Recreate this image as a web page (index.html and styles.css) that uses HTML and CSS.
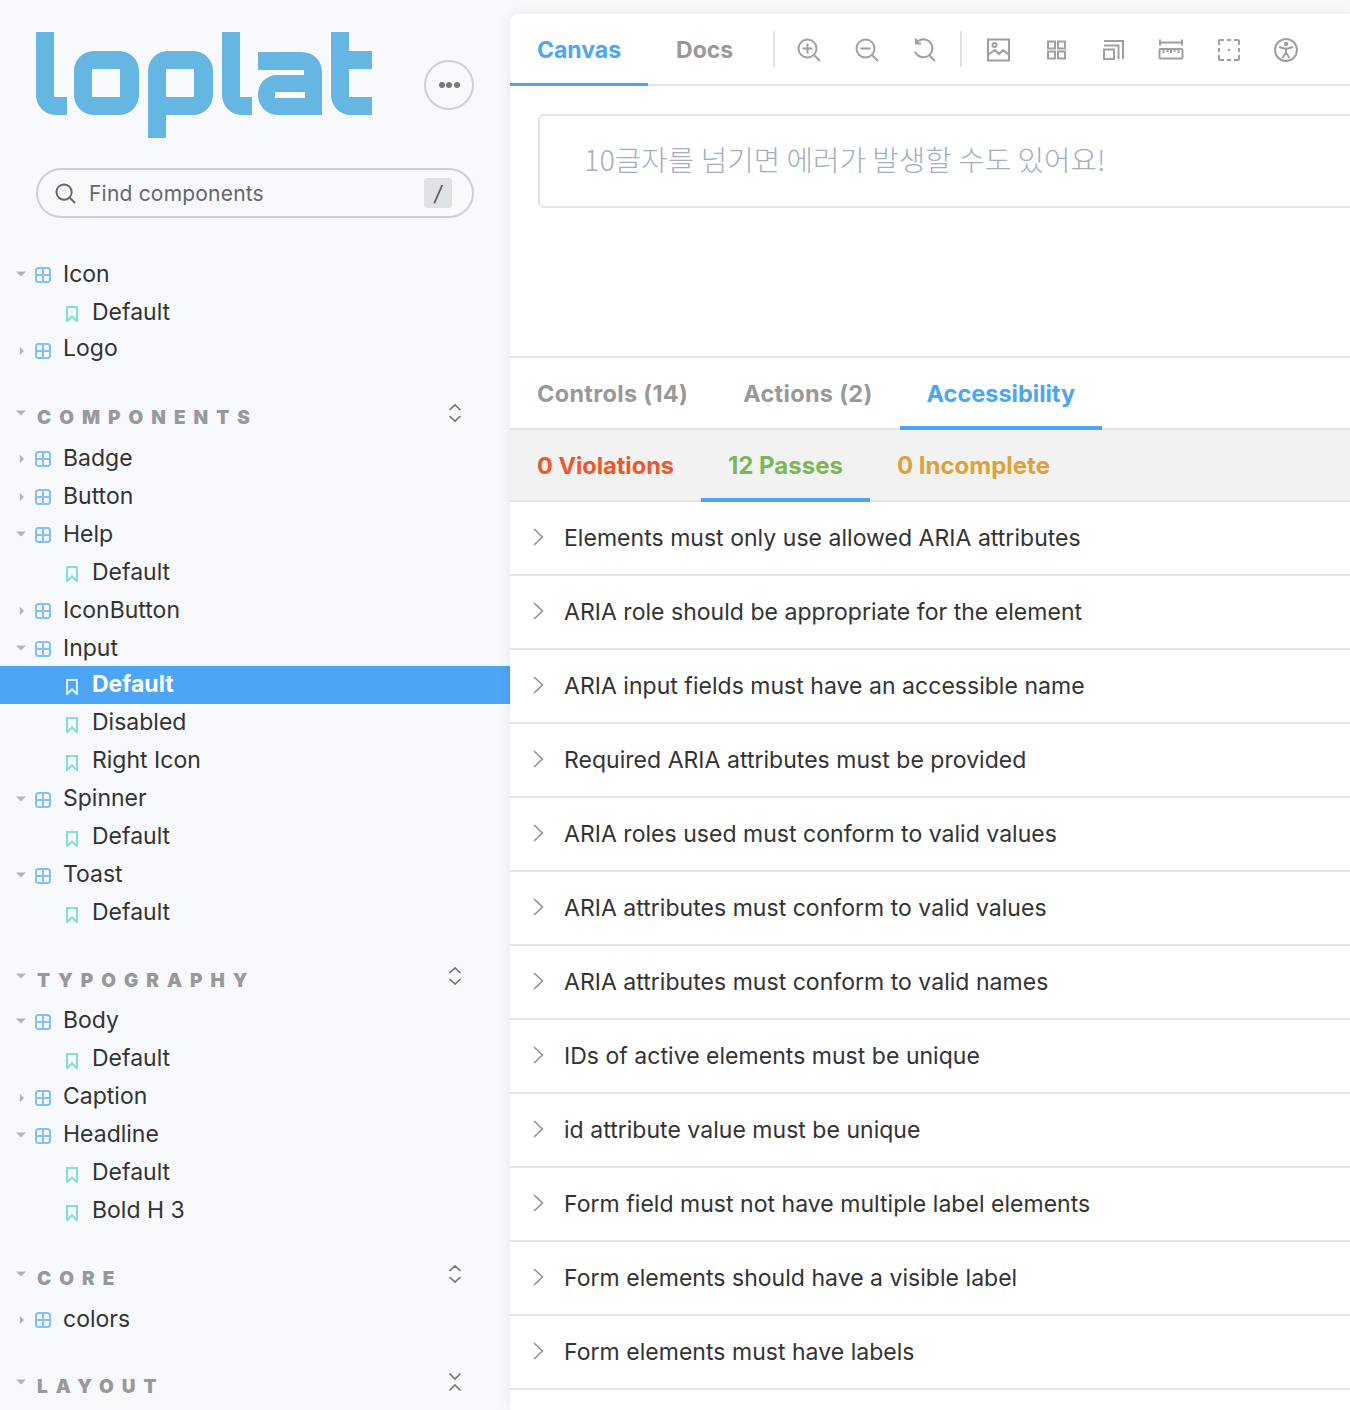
FILE: index.html
```html
<!DOCTYPE html>
<html lang="en">
<head>
<meta charset="utf-8">
<title>loplat</title>
<link rel="stylesheet" href="styles.css">
</head>
<body>
<svg class="defs" aria-hidden="true">
  <symbol id="box" viewBox="0 0 16 16"><rect x="1" y="1" width="14" height="14" rx="2.500" fill="none" stroke="currentColor" stroke-width="2"/><path d="M8 1v14M1 8h14" stroke="currentColor" stroke-width="2"/></symbol>
  <symbol id="mark" viewBox="0 0 12 16"><path d="M1 1h10v14L6 10.500 1 15z" fill="none" stroke="currentColor" stroke-width="2.200"/></symbol>
  <symbol id="right" viewBox="0 0 6 10"><path d="M1 0l5 5-5 5z" fill="currentColor"/></symbol>
  <symbol id="down" viewBox="0 0 10 6"><path d="M0 0.500h10L5 5.500z" fill="currentColor"/></symbol>
  <symbol id="updown" viewBox="0 0 14 20"><path d="M1.500 7L7 1.800 12.500 7M1.500 13L7 18.200 12.500 13" fill="none" stroke="currentColor" stroke-width="1.700"/></symbol>
  <symbol id="collapse" viewBox="0 0 14 20"><path d="M1.500 1.500L7 7 12.500 1.500M1.500 18.500L7 13 12.500 18.500" fill="none" stroke="currentColor" stroke-width="1.700"/></symbol>
  <symbol id="chev" viewBox="0 0 11 18"><path d="M1 1l8.500 8L1 17" fill="none" stroke="currentColor" stroke-width="1.500"/></symbol>
</svg>

<aside class="sidebar">
  <header class="brand">
    <svg class="logo" viewBox="0 0 337 106" role="img" aria-label="loplat">
      <path d="M0 0h18v65h13v18H20A20 20 0 0 1 0 63z"/>
      <path fill-rule="evenodd" d="M58 19h25a20 20 0 0 1 20 20v24a20 20 0 0 1-20 20H58a20 20 0 0 1-20-20V39a20 20 0 0 1 20-20zM56 37v28h28V37z"/>
      <path fill-rule="evenodd" d="M132 19h25a20 20 0 0 1 20 20v24a20 20 0 0 1-20 20h-27v23h-18V39a20 20 0 0 1 20-20zM130 37v28h28V37z"/>
      <path d="M186 0h18v65h12v18h-10a20 20 0 0 1-20-20z"/>
      <path fill-rule="evenodd" d="M222 20h44a20 20 0 0 1 20 20v43h-44a20 20 0 0 1-20-20v-1a19 19 0 0 1 19-19h27v-5h-46zM239 60v6h30v-6z"/>
      <path d="M295 0h18v19h23v18h-23v28h23v18h-21a20 20 0 0 1-20-20z"/>
    </svg>
    <button class="more" type="button" aria-label="More"><span></span><span></span><span></span></button>
  </header>
  <div class="search">
    <svg class="search-icon" viewBox="0 0 22 22"><circle cx="9.500" cy="9.500" r="8" fill="none" stroke="currentColor" stroke-width="2"/><path d="M15.500 15.500L21 21" stroke="currentColor" stroke-width="2"/></svg>
    <span class="search-text">Find components</span>
    <kbd class="key">/</kbd>
  </div>

  <nav class="tree first">
    <div class="row"><svg class="tw down"><use href="#down"/></svg><svg class="bx"><use href="#box"/></svg><span>Icon</span></div>
    <div class="row leaf"><svg class="bm"><use href="#mark"/></svg><span>Default</span></div>
    <div class="row raised"><svg class="tw"><use href="#right"/></svg><svg class="bx"><use href="#box"/></svg><span>Logo</span></div>
  </nav>

  <section>
    <h2 class="head"><svg class="tw down"><use href="#down"/></svg><span>COMPONENTS</span><svg class="ud"><use href="#updown"/></svg></h2>
    <div class="row"><svg class="tw"><use href="#right"/></svg><svg class="bx"><use href="#box"/></svg><span>Badge</span></div>
    <div class="row"><svg class="tw"><use href="#right"/></svg><svg class="bx"><use href="#box"/></svg><span>Button</span></div>
    <div class="row"><svg class="tw down"><use href="#down"/></svg><svg class="bx"><use href="#box"/></svg><span>Help</span></div>
    <div class="row leaf"><svg class="bm"><use href="#mark"/></svg><span>Default</span></div>
    <div class="row"><svg class="tw"><use href="#right"/></svg><svg class="bx"><use href="#box"/></svg><span>IconButton</span></div>
    <div class="row"><svg class="tw down"><use href="#down"/></svg><svg class="bx"><use href="#box"/></svg><span>Input</span></div>
    <div class="row leaf selected"><svg class="bm"><use href="#mark"/></svg><span>Default</span></div>
    <div class="row leaf"><svg class="bm"><use href="#mark"/></svg><span>Disabled</span></div>
    <div class="row leaf"><svg class="bm"><use href="#mark"/></svg><span>Right Icon</span></div>
    <div class="row"><svg class="tw down"><use href="#down"/></svg><svg class="bx"><use href="#box"/></svg><span>Spinner</span></div>
    <div class="row leaf"><svg class="bm"><use href="#mark"/></svg><span>Default</span></div>
    <div class="row"><svg class="tw down"><use href="#down"/></svg><svg class="bx"><use href="#box"/></svg><span>Toast</span></div>
    <div class="row leaf"><svg class="bm"><use href="#mark"/></svg><span>Default</span></div>
  </section>

  <section class="late">
    <h2 class="head"><svg class="tw down"><use href="#down"/></svg><span>TYPOGRAPHY</span><svg class="ud"><use href="#updown"/></svg></h2>
    <div class="row"><svg class="tw down"><use href="#down"/></svg><svg class="bx"><use href="#box"/></svg><span>Body</span></div>
    <div class="row leaf"><svg class="bm"><use href="#mark"/></svg><span>Default</span></div>
    <div class="row"><svg class="tw"><use href="#right"/></svg><svg class="bx"><use href="#box"/></svg><span>Caption</span></div>
    <div class="row"><svg class="tw down"><use href="#down"/></svg><svg class="bx"><use href="#box"/></svg><span>Headline</span></div>
    <div class="row leaf"><svg class="bm"><use href="#mark"/></svg><span>Default</span></div>
    <div class="row leaf"><svg class="bm"><use href="#mark"/></svg><span>Bold H 3</span></div>
  </section>

  <section>
    <h2 class="head"><svg class="tw down"><use href="#down"/></svg><span>CORE</span><svg class="ud"><use href="#updown"/></svg></h2>
    <div class="row"><svg class="tw"><use href="#right"/></svg><svg class="bx"><use href="#box"/></svg><span>colors</span></div>
  </section>

  <section>
    <h2 class="head"><svg class="tw down"><use href="#down"/></svg><span>LAYOUT</span><svg class="ud"><use href="#collapse"/></svg></h2>
  </section>
</aside>

<main class="panel">
  <div class="toolbar">
    <a class="tab active">Canvas</a>
    <a class="tab">Docs</a>
    <i class="sep sep-a"></i>
    <svg class="tool t1" viewBox="0 0 24 24"><circle cx="10.500" cy="10.500" r="9"/><path d="M17 17l6 6M10.500 5.500v10M5.500 10.500h10"/></svg>
    <svg class="tool t2" viewBox="0 0 24 24"><circle cx="10.500" cy="10.500" r="9"/><path d="M17 17l6 6M5.500 10.500h10"/></svg>
    <svg class="tool t3" viewBox="0 0 24 24"><path d="M4.500 4.500A9 9 0 1 1 3 13.500M4 0.500v5h5"/><path d="M18 18l5 5"/></svg>
    <i class="sep sep-b"></i>
    <svg class="tool t4" viewBox="0 0 24 24"><rect x="2" y="1.500" width="21" height="21"/><circle cx="8.500" cy="7" r="2"/><path d="M2 17l7-5 4 4 4-4 6 5"/></svg>
    <svg class="tool t5" viewBox="0 0 24 24"><rect x="4" y="3.500" width="7" height="7"/><rect x="14" y="3.500" width="7" height="7"/><rect x="4" y="13.500" width="7" height="7"/><rect x="14" y="13.500" width="7" height="7"/></svg>
    <svg class="tool t6" viewBox="0 0 24 24"><path d="M3 3h19v18M3 7.500h14.500V21"/><rect x="3" y="11.500" width="10" height="9.500"/></svg>
    <svg class="tool t7" viewBox="0 0 26 24"><path d="M2 1.500v6M24 1.500v6M2 4.500h22"/><rect x="1.500" y="11" width="23" height="9.500" rx="1"/><path d="M5.500 11v4M9.500 11v3M13 11v4M16.500 11v3M20.500 11v4"/></svg>
    <svg class="tool t8" viewBox="0 0 24 24"><path d="M2 7V3a1 1 0 0 1 1-1h4M10 2h4M17 2h4a1 1 0 0 1 1 1v4M22 10v4M22 17v4a1 1 0 0 1-1 1h-4M14 22h-4M7 22H3a1 1 0 0 1-1-1v-4M2 14v-4"/><circle class="solid" cx="12" cy="12" r="1.300"/></svg>
    <svg class="tool t9" viewBox="0 0 24 24"><circle cx="12" cy="12" r="11"/><circle class="solid" cx="12" cy="6" r="2.200"/><path d="M5 9l5 1.500h4L19 9M12 10.500v4M8.500 20l3.500-5.500 3.500 5.500"/></svg>
  </div>

  <div class="stage">
    <input class="field" type="text" placeholder="10글자를 넘기면 에러가 발생할 수도 있어요!" aria-label="Input">
  </div>

  <div class="addon-tabs">
    <a class="tab">Controls (14)</a>
    <a class="tab">Actions (2)</a>
    <a class="tab active">Accessibility</a>
  </div>

  <div class="a11y-tabs">
    <a class="a11y red">0 Violations</a>
    <a class="a11y green active">12 Passes</a>
    <a class="a11y amber">0 Incomplete</a>
  </div>

  <ul class="rules">
    <li><svg class="rule-chev"><use href="#chev"/></svg>Elements must only use allowed ARIA attributes</li>
    <li><svg class="rule-chev"><use href="#chev"/></svg>ARIA role should be appropriate for the element</li>
    <li><svg class="rule-chev"><use href="#chev"/></svg>ARIA input fields must have an accessible name</li>
    <li><svg class="rule-chev"><use href="#chev"/></svg>Required ARIA attributes must be provided</li>
    <li><svg class="rule-chev"><use href="#chev"/></svg>ARIA roles used must conform to valid values</li>
    <li><svg class="rule-chev"><use href="#chev"/></svg>ARIA attributes must conform to valid values</li>
    <li><svg class="rule-chev"><use href="#chev"/></svg>ARIA attributes must conform to valid names</li>
    <li><svg class="rule-chev"><use href="#chev"/></svg>IDs of active elements must be unique</li>
    <li><svg class="rule-chev"><use href="#chev"/></svg>id attribute value must be unique</li>
    <li><svg class="rule-chev"><use href="#chev"/></svg>Form field must not have multiple label elements</li>
    <li><svg class="rule-chev"><use href="#chev"/></svg>Form elements should have a visible label</li>
    <li><svg class="rule-chev"><use href="#chev"/></svg>Form elements must have labels</li>
  </ul>
</main>
</body>
</html>
```

FILE: styles.css
```css
* { box-sizing: border-box; }
html, body { margin: 0; height: 1410px; overflow: hidden; }
body {
  display: flex;
  background: #f8f9fd;
  color: #333;
  font-family: Inter, "Noto Sans CJK KR", sans-serif;
  font-size: 23px;
}
.defs { display: none; }

.sidebar { width: 510px; flex: none; }
.brand { display: flex; align-items: flex-start; padding: 32px 36px 0; height: 168px; }
.logo { width: 337px; height: 106px; fill: #65b6e3; flex: none; }
.more {
  margin: 28px 0 0 51px;
  width: 50px; height: 50px;
  border: 2px solid #d0d0d2; border-radius: 50%;
  background: transparent;
  display: flex; align-items: center; justify-content: center; gap: 1.500px; padding: 0;
}
.more span { width: 6px; height: 6px; border-radius: 50%; background: #777; }

.search {
  margin: 0 36px;
  height: 50px;
  border: 2px solid #cfd0d3; border-radius: 25px;
  display: flex; align-items: center;
  padding: 0 20px 0 17px;
  color: #666;
  font-size: 21px;
}
.search-icon { width: 21px; height: 21px; margin-right: 13px; }
.search-text { flex: 1; letter-spacing: .2px; }
.key {
  width: 28px; height: 30px;
  background: #e0e1e3; border-radius: 3px;
  font: inherit; color: #555; font-style: italic;
  display: flex; align-items: center; justify-content: center;
}

.tree.first { margin-top: 37px; }
section { margin-top: 29px; }
.row {
  height: 38px;
  display: flex; align-items: center;
  padding-left: 16px;
  color: #333;
  font-size: 23px;
}
.row.raised span { margin-bottom: 5px; }
.row.selected span, .row.selected ~ .row span, .late .row span { margin-bottom: 2px; }
.tw { width: 5px; height: 10px; margin: 2px 11px 0 3px; color: #b3b5b8; flex: none; }
.tw.down { width: 10px; height: 6px; margin: 0 9px 0 0; }
.bx { width: 16px; height: 16px; margin: 2px 12px 0 0; color: #82c0fb; flex: none; }
.row.leaf { padding-left: 66px; }
.bm { width: 12px; height: 16px; margin: 3px 14px 0 0; color: #82e0d8; flex: none; }
.row.selected {
  margin-top: -1px;
  background: #4ca5f6;
  color: #fff;
  font-weight: 700;
}
.row.selected .bm { color: #dcecfd; }

.head {
  height: 38px; margin: 0 0 3px;
  display: flex; align-items: center;
  padding-left: 16px; padding-right: 48px;
  font-size: 19px; font-weight: 900;
  color: #999;
  letter-spacing: 8px;
}
.head span { flex: 1; }
.head .tw.down { margin: 0 11px 8px 0; }
.ud { width: 14px; height: 20px; color: #777; margin-bottom: 8px; flex: none; }

.panel {
  flex: 1;
  min-width: 0;
  margin-top: 14px;
  background: #fff;
  border-top-left-radius: 8px;
  box-shadow: 0 0 12px rgba(0, 0, 0, .08);
  height: 1396px;
}

.toolbar {
  height: 72px;
  border-bottom: 2px solid #e6e6e6;
  display: flex; align-items: center;
}
.tab {
  font-size: 23.500px; font-weight: 700; color: #999;
  padding: 0 27px;
  align-self: stretch;
  display: flex; align-items: center;
}
.tab.active { color: #4ca5f6; box-shadow: inset 0 -3px 0 #4ca5f6; }
.toolbar .tab { margin-bottom: -2px; height: 72px; font-size: 23px; }
.toolbar .tab + .tab { margin-left: 1px; }
.sep { width: 2px; height: 36px; background: #e2e2e2; flex: none; }
.sep-a { margin-left: 13px; }
.sep-b { margin-left: 24px; }
.tool { width: 24px; height: 24px; margin-top: 2px; fill: none; stroke: #a0a0a0; stroke-width: 2; flex: none; }
.tool .solid { fill: #a0a0a0; stroke: none; }
.t1 { margin-left: 22px; }
.t2 { margin-left: 34px; }
.t3 { margin-left: 33px; }
.t4 { margin-left: 24px; }
.t5 { margin-left: 34px; }
.t6, .t9 { margin-left: 33px; }
.t7 { width: 26px; margin-left: 33px; }
.t8 { margin-left: 33px; }

.stage { height: 272px; padding: 28px 0 0 28px; border-bottom: 2px solid #e6e6e6; overflow: hidden; }
.field {
  display: block;
  width: 900px; height: 94px;
  border: 2px solid #e4e4e4; border-radius: 6px;
  padding: 0 44px 5px;
  font: 300 28.800px "Noto Sans CJK KR", sans-serif;
  background: #fff;
}
.field::placeholder { color: #a3afbf; opacity: 1; }

.addon-tabs {
  height: 72px;
  display: flex;
  gap: 1px;
  border-bottom: 2px solid #e6e6e6;
}
.addon-tabs .tab { margin-bottom: -2px; height: 72px; padding-bottom: 2px; letter-spacing: .3px; }
.addon-tabs .tab.active { box-shadow: inset 0 -4px 0 #4ca5f6; letter-spacing: 0; margin-left: -1px; }
.a11y-tabs {
  height: 72px;
  display: flex;
  background: #f2f2f2;
  border-bottom: 2px solid #e3e3e3;
}
.a11y {
  font-size: 23.500px; font-weight: 700;
  padding: 0 27px 2px;
  height: 72px;
  display: flex; align-items: center;
}
.a11y.red { color: #f1562a; }
.a11y.green { color: #7ab857; font-size: 24px; box-shadow: inset 0 -4px 0 #4ca5f6; }
.a11y.amber { color: #e0a13a; font-size: 24px; }

.rules { list-style: none; margin: 0; padding: 0; }
.rules li {
  height: 74px;
  display: flex; align-items: center;
  padding: 0 0 0 23px;
  border-bottom: 2px solid #e6e6e6;
  color: #333;
  font-size: 23px;
  letter-spacing: .03px;
}
.rule-chev { width: 11px; height: 18px; color: #8f8f8f; margin: 0 20px 2px 0; flex: none; }
```
